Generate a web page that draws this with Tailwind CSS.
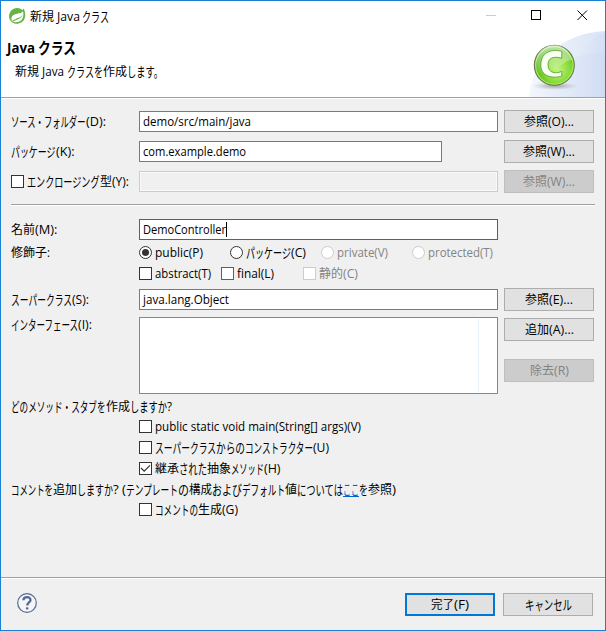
<!DOCTYPE html>
<html lang="ja">
<head>
<meta charset="utf-8">
<title>新規 Java クラス</title>
<script src="https://cdn.jsdelivr.net/npm/@tailwindcss/browser@4"></script>
</head>
<body class="overflow-hidden">
<div class="w-[606px] h-[631px] border border-[#1a80d6] bg-[#f0f0f0] flex flex-col text-[12px] leading-[16px] text-black font-['Open_Sans','Noto_Sans_CJK_JP',sans-serif]">
  <div class="h-[96px] shrink-0 bg-white relative">
    <svg class="absolute right-0 top-[29px]" width="76" height="67" viewBox="0 0 76 67">
      <defs>
        <linearGradient id="sky" x1="0" x2="1"><stop offset="0" stop-color="#f4f7fd"/><stop offset="1" stop-color="#d9e4f6"/></linearGradient>
        <linearGradient id="sky2" x1="0" x2="1"><stop offset="0" stop-color="#e5ecf9" stop-opacity=".2"/><stop offset="1" stop-color="#cbd9f1"/></linearGradient>
        <radialGradient id="ball" cx=".58" cy=".62" r=".6"><stop offset="0" stop-color="#c3f47d"/><stop offset=".55" stop-color="#85d936"/><stop offset="1" stop-color="#42ab12"/></radialGradient>
        <linearGradient id="shine" x2="0" y2="1"><stop offset="0" stop-color="#fff" stop-opacity=".65"/><stop offset="1" stop-color="#fff" stop-opacity=".05"/></linearGradient>
        <radialGradient id="shade"><stop offset="0" stop-color="#777" stop-opacity=".65"/><stop offset="1" stop-color="#999" stop-opacity="0"/></radialGradient>
      </defs>
      <path d="M0 67C2 32 32 3 76 1V67Z" fill="url(#sky)"/>
      <path d="M43 67C43 38 54 8 76 2V67Z" fill="url(#sky2)" opacity=".5"/>
      <path d="M0 67C9 43 35 24 76 22V67Z" fill="url(#sky2)" opacity=".5"/>
      <ellipse cx="26" cy="56" rx="23" ry="4" fill="url(#shade)"/>
    </svg>
    <svg class="absolute left-[532px] top-[43px]" width="44" height="44" viewBox="0 0 44 44">
      <circle cx="21.3" cy="21.3" r="20" fill="url(#ball)" stroke="#6c7650" stroke-width="1.1"/>
      <circle cx="21.3" cy="21.3" r="18.7" fill="none" stroke="#a7ec60" stroke-width="1.1"/>
      <path d="M3 23A18.3 18.3 0 0 1 39 16C29 17 24 30 5 29Z" fill="url(#shine)"/>
      <path d="M28.8 7.5V14.3C24.5 12.8 15 11.8 15 20.5C15 30 24 29.8 28.8 27.3V32C24 34 7.8 35 7.8 21C7.8 6 22 5 28.8 7.5Z" fill="#fafff3" stroke="#53a928" stroke-width=".9"/>
    </svg>
    <div class="h-[29px] flex items-center pl-[7px] relative">
      <svg class="shrink-0" width="18" height="18" viewBox="0 0 18 18">
        <path d="M15.6 1.4C18.2 6.5 17.7 12.4 14 15C9.5 18.2 3.5 17.2 1.5 12C-.2 6.8 3.4 1 9 1.1C12 1.1 13.6 2.7 14.4 3Q15.2 2.3 15.6 1.4Z" fill="#67b345"/>
        <path d="M15 4.2C13 7.4 5 5.6 3.5 10.6C3.2 12.3 3.6 13.3 4.3 14.3C6.4 15.6 9.4 15.2 11.3 14.4C15.3 12.6 16 8 15 4.2Z" fill="#fff"/>
        <path d="M4.2 13.7C8 11 12.4 11.2 14.8 7.4C13.4 12.2 8 12.2 5 14.6Z" fill="#67b345"/>
      </svg>
      <div class="flex ml-[4px] mt-[2px]"><span data-w="24">新規</span><span class="ml-[3px]" data-w="23">Java</span><span class="ml-[2px]" data-w="27">クラス</span></div>
      <svg class="absolute left-[480px] top-0" width="120" height="29" fill="none" shape-rendering="crispEdges">
        <path d="M5 14.5H15" stroke="#ccc"/>
        <rect x="50.5" y="9.5" width="9" height="9" stroke="#000"/>
        <path d="M96.5 9.5L106 19M106 9.5L96.5 19" stroke="#000" shape-rendering="auto"/>
      </svg>
    </div>
    <div class="flex font-bold text-[14px] leading-[20px] mt-[8px] pl-[6px]"><span data-w="28">Java</span><span class="ml-[3px]" data-w="38">クラス</span></div>
    <div class="flex mt-[6px] pl-[14px]"><span data-w="24">新規</span><span class="ml-[3px]" data-w="22">Java</span><span class="ml-[3px]" data-w="36">クラスを</span><span data-w="24">作成</span><span data-w="36">します。</span></div>
  </div>
  <div class="h-[2px] shrink-0 bg-[#a0a0a0] border-b border-white"></div>

  <div class="pt-[11px] pl-[10px] flex flex-col">
    <div class="flex items-center h-[23px]">
      <div class="w-[128px] flex"><span data-w="74.5">ソース・フォルダー</span><span data-w="20">(D):</span></div>
      <div class="w-[359px] h-[21px] border border-[#7a7a7a] bg-white pl-[3px] flex items-center"><span data-w="108">demo/src/main/java</span></div>
      <div class="ml-[6px] w-[90px] h-[23px] border border-[#adadad] bg-[#e1e1e1] flex items-center justify-center"><span data-w="24">参照</span><span data-w="26">(O)...</span></div>
    </div>
    <div class="flex items-center h-[23px] mt-[7px]">
      <div class="w-[128px] flex"><span data-w="44.5">パッケージ</span><span data-w="18.5">(K):</span></div>
      <div class="w-[303px] h-[21px] border border-[#7a7a7a] bg-white pl-[3px] flex items-center"><span data-w="103">com.example.demo</span></div>
      <div class="ml-[62px] w-[90px] h-[23px] border border-[#adadad] bg-[#e1e1e1] flex items-center justify-center"><span data-w="24">参照</span><span data-w="28">(W)...</span></div>
    </div>
    <div class="flex items-center h-[23px] mt-[7px]">
      <div class="w-[128px] flex items-center"><i class="size-[13px] border border-[#333] bg-white mr-[3px]"></i><span data-w="72.5">エンクロージング</span><span data-w="12">型</span><span data-w="17">(Y):</span></div>
      <div class="w-[359px] h-[21px] border border-[#ccc] bg-[#f0f0f0] shadow-[inset_0_0_0_1px_#fafafa]"></div>
      <div class="ml-[6px] w-[90px] h-[23px] border border-[#bfbfbf] bg-[#ccc] text-[#838383] flex items-center justify-center"><span data-w="24">参照</span><span data-w="28">(W)...</span></div>
    </div>
    <div class="mt-[11px] h-[2px] w-[584px] bg-[#a0a0a0] border-b border-white"></div>
    <div class="flex items-center h-[23px] mt-[12px]">
      <div class="w-[128px] flex"><span data-w="24">名前</span><span data-w="22.5">(M):</span></div>
      <div class="w-[359px] h-[21px] border border-[#0078d7] bg-white pl-[3px] flex items-center"><span data-w="83">DemoController</span><i class="w-px h-[15px] bg-black"></i></div>
    </div>
    <div class="flex items-center h-[19px] mt-[2px]">
      <div class="w-[128px] flex"><span data-w="36">修飾子</span><span data-w="3">:</span></div>
      <div class="w-[91px] flex items-center"><i class="size-[13px] rounded-full border border-[#333] bg-white mr-[3px] flex items-center justify-center"><i class="size-[7px] rounded-full bg-[#333]"></i></i><span data-w="48">public(P)</span></div>
      <div class="w-[91px] flex items-center"><i class="size-[13px] rounded-full border border-[#333] bg-white mr-[3px]"></i><span data-w="45">パッケージ</span><span data-w="15">(C)</span></div>
      <div class="w-[91px] flex items-center text-[#838383]"><i class="size-[13px] rounded-full border border-[#ccc] bg-white mr-[3px]"></i><span data-w="51">private(V)</span></div>
      <div class="flex items-center text-[#838383]"><i class="size-[13px] rounded-full border border-[#ccc] bg-white mr-[3px]"></i><span data-w="65">protected(T)</span></div>
    </div>
    <div class="flex items-center h-[19px] mt-[2px] pl-[128px]">
      <div class="w-[82px] flex items-center"><i class="size-[13px] border border-[#333] bg-white mr-[3px]"></i><span data-w="56">abstract(T)</span></div>
      <div class="w-[82px] flex items-center"><i class="size-[13px] border border-[#0078d7] bg-white mr-[3px]"></i><span data-w="37">final(L)</span></div>
      <div class="flex items-center text-[#838383]"><i class="size-[13px] border border-[#ccc] bg-white mr-[3px]"></i><span data-w="24">静的</span><span data-w="15">(C)</span></div>
    </div>
    <div class="flex items-center h-[23px] mt-[5px]">
      <div class="w-[128px] flex"><span data-w="61">スーパークラス</span><span data-w="17">(S):</span></div>
      <div class="w-[359px] h-[21px] border border-[#7a7a7a] bg-white pl-[3px] flex items-center"><span data-w="86">java.lang.Object</span></div>
      <div class="ml-[6px] w-[90px] h-[23px] border border-[#adadad] bg-[#e1e1e1] flex items-center justify-center"><span data-w="24">参照</span><span data-w="24">(E)...</span></div>
    </div>
    <div class="flex h-[77px] mt-[6px]">
      <div class="w-[128px] flex"><span data-w="67">インターフェース</span><span data-w="14">(I):</span></div>
      <div class="w-[359px] h-[77px] border border-[#828790] bg-white pl-[338px] py-px"><div class="w-px h-full bg-[#e5f1fb]"></div></div>
      <div class="ml-[6px] pt-px">
        <div class="w-[90px] h-[23px] border border-[#adadad] bg-[#e1e1e1] flex items-center justify-center"><span data-w="24">追加</span><span data-w="25">(A)...</span></div>
        <div class="mt-[18px] w-[90px] h-[23px] border border-[#bfbfbf] bg-[#ccc] text-[#838383] flex items-center justify-center"><span data-w="24">除去</span><span data-w="15">(R)</span></div>
      </div>
    </div>
    <div class="flex items-center h-[20px] mt-[3px]"><span data-w="94.5">どのメソッド・スタブを</span><span data-w="24">作成</span><span data-w="37">しますか</span><span data-w="5">?</span></div>
    <div class="flex items-center h-[19px] pl-[128px]"><i class="size-[13px] border border-[#333] bg-white mr-[3px]"></i><span data-w="206">public static void main(String[] args)(V)</span></div>
    <div class="flex items-center h-[19px] mt-[2px] pl-[128px]"><i class="size-[13px] border border-[#333] bg-white mr-[3px]"></i><span data-w="61">スーパークラス</span><span data-w="29">からの</span><span data-w="68">コンストラクター</span><span data-w="16">(U)</span></div>
    <div class="flex items-center h-[19px] mt-[2px] pl-[128px]"><i class="size-[13px] border border-[#333] bg-white mr-[3px]"><svg width="11" height="11" fill="none" stroke="#333" stroke-width="1.2"><path d="M1 5L4.2 8.2L10 2.4"/></svg></i><span data-w="24">継承</span><span data-w="28">された</span><span data-w="24">抽象</span><span data-w="33">メソッド</span><span data-w="16.5">(H)</span></div>
    <div class="flex items-center h-[20px] mt-[2px]"><span data-w="42">コメントを</span><span data-w="24">追加</span><span data-w="36">しますか</span><span data-w="13">? (</span><span data-w="52">テンプレート</span><span data-w="11">の</span><span data-w="23">構成</span><span data-w="30">および</span><span data-w="43">デフォルト</span><span data-w="12">値</span><span data-w="46">については</span><a class="flex text-[#0066cc] border-b border-[#0066cc] h-[14px] leading-[15px]"><span data-w="16">ここ</span></a><span data-w="9">を</span><span data-w="24">参照</span><span data-w="4">)</span></div>
    <div class="flex items-center h-[19px] pl-[128px]"><i class="size-[13px] border border-[#333] bg-white mr-[3px]"></i><span data-w="43">コメントの</span><span data-w="24">生成</span><span data-w="16">(G)</span></div>
  </div>

  <div class="mt-auto h-[53px] shrink-0 border-t border-[#a0a0a0]">
    <div class="border-t border-white pt-[14px] pl-[16px] flex">
      <svg width="20" height="20" viewBox="0 0 20 20"><circle cx="10" cy="10" r="9.3" fill="#f4f5f7" stroke="#566992" stroke-width="1.2"/><path d="M6.4 7.2C6.6 3.2 13.7 3.2 13.5 7.1C13.4 9.4 10.2 9.5 10.2 12.5" fill="none" stroke="#566992" stroke-width="2.3"/><rect x="8.9" y="14.2" width="2.5" height="2.4" rx=".8" fill="#566992"/></svg>
      <div class="ml-[368px] w-[90px] h-[23px] border-2 border-[#0078d7] bg-[#e1e1e1] flex items-center justify-center"><span data-w="23">完了</span><span data-w="15">(F)</span></div>
      <div class="ml-[8px] w-[90px] h-[23px] border border-[#adadad] bg-[#e1e1e1] flex items-center justify-center"><span data-w="47">キャンセル</span></div>
    </div>
  </div>
</div>
<script>
// Condense each text run to its UI-font advance width; kana are drawn taller than Latin text.
function fitRuns() {
  document.querySelectorAll('[data-w]').forEach(function (el) {
    var w = parseFloat(el.dataset.w);
    var s = el.style;
    if (/^[\u3000-\u30ff]+$/.test(el.textContent)) s.fontSize = el.closest('.font-bold') ? '15.5px' : '13.5px';
    s.display = 'block';
    s.flexShrink = '0';
    s.whiteSpace = 'pre';
    s.transform = 'none';
    s.marginRight = '0';
    s.width = 'max-content';
    var n = el.getBoundingClientRect().width;
    s.width = n + 'px';
    s.marginRight = (w - n) + 'px';
    s.transformOrigin = '0 50%';
    s.transform = 'scaleX(' + (w / n) + ')';
  });
}
fitRuns();
window.addEventListener('load', fitRuns);
document.fonts.ready.then(fitRuns);
</script>
</body>
</html>
